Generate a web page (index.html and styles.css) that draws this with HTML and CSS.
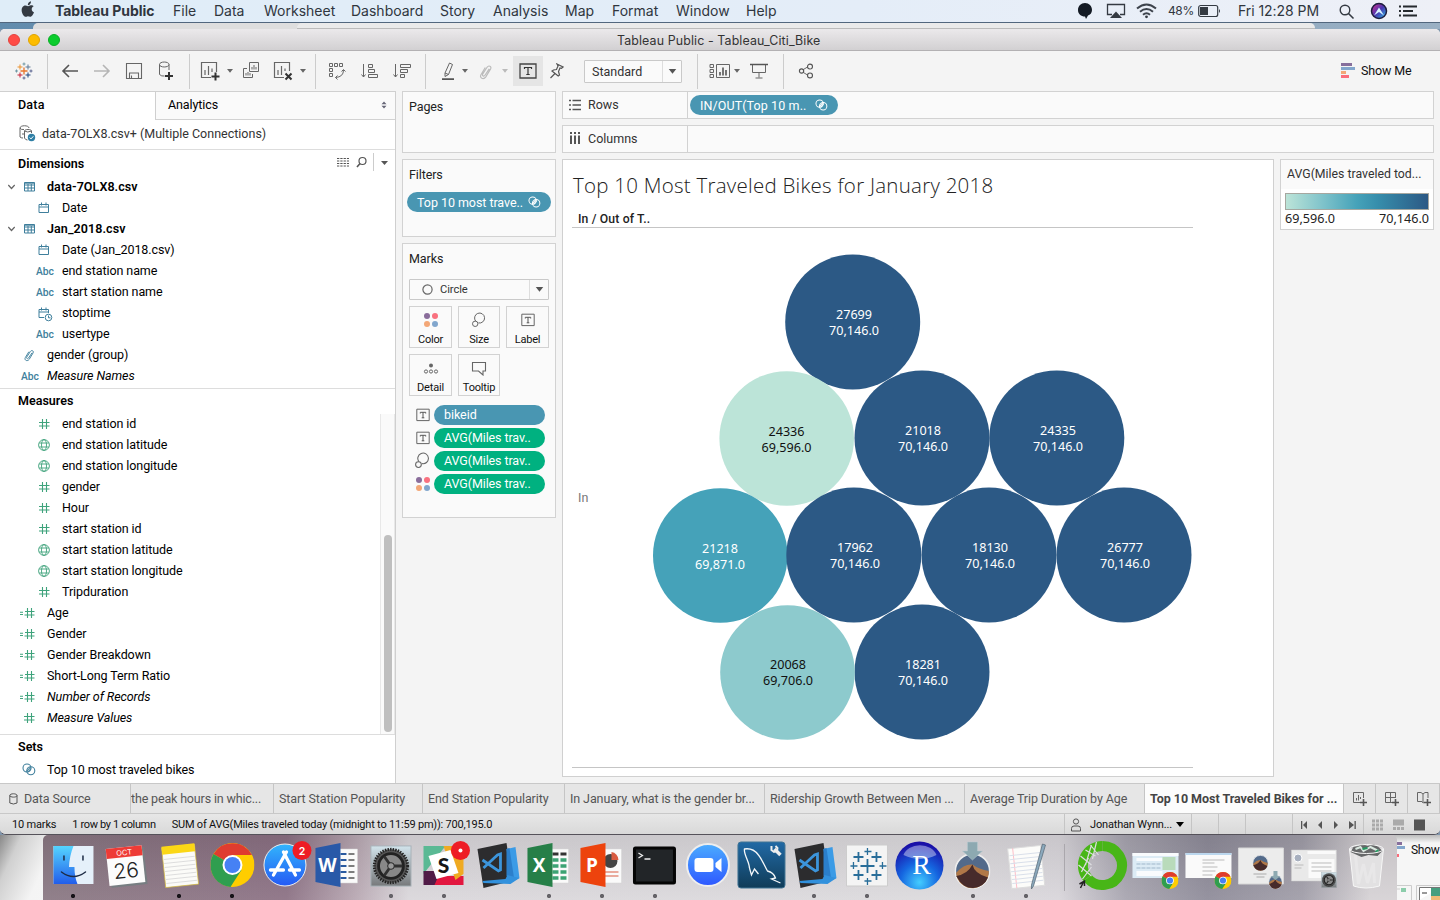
FILE: index.html
```html
<!DOCTYPE html>
<html lang="en">
<head>
<meta charset="utf-8">
<title>Tableau Public - Tableau_Citi_Bike</title>
<link rel="stylesheet" href="styles.css">
</head>
<body>
<svg class="defs" width="0" height="0">
  <symbol id="i-table" viewBox="0 0 12 10"><path d="M.5.5h10v8.500H.5zM.5 3h10M.5 6h10M4 2v7M7.300 2v7M.5 1.200h10" fill="none" stroke="#3f7f9c"/></symbol>
  <symbol id="i-date" viewBox="0 0 12 12"><path d="M1 2.500h9.500v8H1zM1 5h9.500M3.500.5v3M8 .5v3" fill="none" stroke="#3f7f9c"/></symbol>
  <symbol id="i-datetime" viewBox="0 0 15 15"><path d="M6 10.500H1V2.500h9.500V6M1 5h9.500M3.500.5v3M8 .5v3M10.500 8.500v2.300h2" fill="none" stroke="#3f7f9c"/><circle cx="10.500" cy="10.500" r="3.300" fill="none" stroke="#3f7f9c"/></symbol>
  <symbol id="i-clip" viewBox="0 0 14 16"><path d="M10.500 5.500 6.500 11.500c-1 1.500-3 .5-2.200-1L8.500 4c1.500-2.300 4.500-.8 3.300 1.500L7.300 13c-2.300 3.200-6.200 1-4.600-2L6.800 4.200" fill="none" stroke="currentColor" stroke-width="1.100"/></symbol>
  <symbol id="i-hash" viewBox="0 0 12 12"><path d="M4.500 1v10M8.500 1v10M1 4.500h10.500M1 8h10.500" fill="none" stroke="#3fa37c" stroke-width="1.100"/></symbol>
  <symbol id="i-calc" viewBox="0 0 15 12"><path d="M7.500 1v10M11.500 1v10M5 4.500h9.500M4.500 8h10M0 5.200h3M0 7.500h3" fill="none" stroke="#3fa37c" stroke-width="1.100"/></symbol>
  <symbol id="i-globe" viewBox="0 0 12 12"><g fill="none" stroke="#3fa37c" stroke-width=".9"><circle cx="6" cy="6" r="5.400"/><ellipse cx="6" cy="6" rx="2.500" ry="5.400"/><path d="M1.200 4h9.600M1.200 8h9.600"/></g></symbol>
  <symbol id="i-set" viewBox="0 0 14 13"><g fill="none" stroke="currentColor" stroke-width="1.100"><circle cx="5" cy="5" r="4"/><circle cx="8.800" cy="7.800" r="4"/><path d="M4.500 8.500 8.500 4M6 9l3-3.500"/></g></symbol>
  <symbol id="i-text" viewBox="0 0 14 14"><path d="M.8 1.200h12.400v11.400H.8z" fill="none" stroke="#666"/><path d="M4.300 5.500V4.300h5.400v1.200M7 4.300v5.500M5.700 9.800h2.600" fill="none" stroke="#555"/></symbol>
  <symbol id="i-size" viewBox="0 0 16 16"><g fill="none" stroke="#666"><path d="M4.700 9.200A5 5 0 1 1 7.400 10.900"/><circle cx="4.200" cy="11.800" r="2.700"/></g></symbol>
  <symbol id="i-color" viewBox="0 0 16 16"><circle cx="4" cy="4" r="3" fill="#8a6d9b"/><circle cx="12" cy="4" r="3" fill="#f9717f"/><circle cx="4" cy="12" r="3" fill="#f3a777"/><circle cx="12" cy="12" r="3" fill="#81a6cd"/></symbol>
  <symbol id="i-caret" viewBox="0 0 6 4"><path d="M0 0h6L3 3.800z" fill="currentColor"/></symbol>
  <symbol id="i-chev" viewBox="0 0 8 6"><path d="M.8 1 4 4.500 7.200 1" fill="none" stroke="#666" stroke-width="1.200"/></symbol>
  <symbol id="i-chrome" viewBox="0 0 44 44"><circle cx="22" cy="22" r="22" fill="#ffcd00"/><path d="M22 22 3 11A22 22 0 0 1 41.500 12H22z" fill="#df3c2f"/><path d="M3 11A22 22 0 0 0 20 44L31 27 22 22z" fill="#2f9e4f"/><circle cx="22" cy="22" r="10" fill="#fff"/><circle cx="22" cy="22" r="8" fill="#4681f4"/></symbol>
  <symbol id="i-word" viewBox="0 0 52 60"><path d="M18 14h27v34H18z" fill="#fafafa" stroke="#d5d5d5" stroke-width=".5"/></symbol>
  <symbol id="i-gear" viewBox="0 0 44 44"><rect x="1" y="1" width="42" height="42" fill="url(#g-steel)" stroke="#a8b2b8" stroke-width="1"/><circle cx="22" cy="22" r="17.500" fill="#555" /><circle cx="22" cy="22" r="17.500" fill="none" stroke="#222" stroke-width="3" stroke-dasharray="1.500 1.200"/><circle cx="22" cy="22" r="13" fill="#888" stroke="#222" stroke-width="3"/><path d="M22 22h12M22 22l-7-10M22 22l-7 10" stroke="#303030" stroke-width="3"/><circle cx="22" cy="22" r="3.500" fill="#999" stroke="#222"/></symbol>
  <symbol id="i-code" viewBox="0 0 52 60"><path d="m6 14 29-6 6 38-29 7z" fill="#2c2c2e"/><path d="m35 14 9-2 4 31-8 4z" fill="#3b9be6"/><path d="m35 14 3-1 5 33-8-5z" fill="#2b7fcb"/><path d="m11 46 23-2 2-4 12 3-9 6-27-1z" fill="#3291dd"/><path d="m11 25 16 11 2-1V19l-3 1-14 13" fill="none" stroke="#3c95dc" stroke-width="2.800"/><path d="M25 23v9l-5-4z" fill="#2c2c2e"/></symbol>
  <symbol id="i-mojave" viewBox="0 0 44 44"><circle cx="22" cy="22" r="21" fill="#536a8a" stroke="#eee" stroke-width="2"/><path d="M2 24q10-11 20-10 8 6 20 8a20 20 0 0 1-40 2z" fill="#b07848"/><path d="M2 28q14-2 20-14 2 11 19 16a20 20 0 0 1-37 1z" fill="#472b2b"/></symbol>
  <linearGradient id="g-steel" x2="0" y2="1"><stop stop-color="#d2e4ec"/><stop offset="1" stop-color="#77797b"/></linearGradient>
  <linearGradient id="g-blue" x2="0" y2="1"><stop stop-color="#32b5fc"/><stop offset="1" stop-color="#2559f4"/></linearGradient>
  <linearGradient id="g-zoom" x2="0" y2="1"><stop stop-color="#4bacff"/><stop offset="1" stop-color="#2e57ff"/></linearGradient>
  <linearGradient id="g-face" x2="0" y2="1"><stop stop-color="#55d5ff"/><stop offset="1" stop-color="#225dea"/></linearGradient>
  <linearGradient id="g-sql" x2="0" y2="1"><stop stop-color="#2169a5"/><stop offset="1" stop-color="#103c58"/></linearGradient>
  <radialGradient id="g-r" cx=".5" cy=".85" r=".8"><stop stop-color="#43cdff"/><stop offset=".5" stop-color="#1566e0"/><stop offset="1" stop-color="#1a10a8"/></radialGradient>
  <linearGradient id="g-siri" x1="0" x2="1" y2="1"><stop stop-color="#e0308f"/><stop offset=".5" stop-color="#4936b0"/><stop offset="1" stop-color="#2cc1e8"/></linearGradient>
</svg>

<header class="menubar">
  <svg class="apple" width="16" height="18" viewBox="0 0 16 18"><path d="M8 5.300C6.500 4.500 5 4.300 3.700 5 .8 6.800 1.200 11 3.500 14.500c1.500 1.800 2.500 1.300 4.300.7 2 .6 3 1 4.500-.8.9-1.100 1.400-2 1.700-3.100-3-1.300-2.900-4.900-.3-6.100C12.300 3.500 9.800 4.700 8 5.300zM7.800 4.300c0-2.200 1.400-3.600 3.200-4 .2 2.200-1.300 3.900-3.200 4z" fill="#343a42"/></svg>
  <b>Tableau Public</b><span>File</span><span>Data</span><span>Worksheet</span><span>Dashboard</span><span>Story</span><span>Analysis</span><span>Map</span><span>Format</span><span>Window</span><span>Help</span>
  <svg class="tray-a" width="86" height="20" viewBox="0 0 86 20"><path d="M9 2c4 0 7 3 7 7 0 3-2 5-4 5.500L10 18l-1-2.500C5 15.500 2 13 2 9s3-7 7-7z" fill="#131a24"/><path d="M36 13.500h-4.500V3.500h17v10H44" fill="none" stroke="#343a42" stroke-width="1.300"/><path d="m34 17 6-6.500 6 6.500z" fill="#343a42"/><g fill="none" stroke="#3d434c" stroke-width="2"><path d="M61 7.500q9.500-8 19 0"/><path d="M64 10.700q6.500-5.500 13 0"/><path d="M67 13.700q3.500-3 7 0"/></g><circle cx="70.500" cy="15.800" r="1.400" fill="#343a42"/></svg>
  <span class="pct">48%</span>
  <svg class="battery" width="24" height="14" viewBox="0 0 24 14"><rect x=".7" y="1.500" width="19" height="11" rx="2" fill="none" stroke="#343a42" stroke-width="1.200"/><path d="M2 3h8v8H2z" fill="#343a42"/><path d="M21 5q2 2 0 4z" fill="#343a42"/></svg>
  <span class="clock">Fri 12:28 PM</span>
  <svg class="tray-b" width="82" height="20" viewBox="0 0 82 20"><circle cx="6" cy="9" r="4.800" fill="none" stroke="#343a42" stroke-width="1.400"/><path d="m9.500 12.500 5 5" stroke="#343a42" stroke-width="1.600"/><circle cx="40" cy="10" r="7.500" fill="url(#g-siri)" stroke="#1d1c3e" stroke-width="1.500"/><path d="m35 14.500 5-8 5 8-5-3.500z" fill="#d9f4ff"/><path d="M60 5.500h2M60 10h2M60 14.500h2M64 5.500h14M64 10h10M64 14.500h14" stroke="#25292e" stroke-width="1.800"/></svg>
</header>
<div class="behind"><i></i><i></i></div>

<main class="window">
  <div class="titlebar"><i class="red"></i><i class="yellow"></i><i class="green"></i><span>Tableau Public - Tableau_Citi_Bike</span></div>

  <div class="toolbar">
    <span class="cell logo"><svg width="18" height="18" viewBox="0 0 18 18" fill="none"><path d="M9 5.500v7M5.500 9h7" stroke="#e8762c" stroke-width="1.300"/><path d="M5 2.500v5M2.500 5h5" stroke="#eb912c"/><path d="M13 2.500v5M10.500 5h5" stroke="#5c7896"/><path d="M5 10.500v5M2.500 13h5" stroke="#c72037"/><path d="M13 10.500v5M10.500 13h5" stroke="#1f457e"/><path d="M9 .5v3M7.500 2h3M1.500 7.500v3M0 9h3" stroke="#7099a5"/><path d="M9 14.500v3M7.500 16h3M16 7.500v3M14.500 9h3" stroke="#5b6591"/></svg></span>
    <i class="sep"></i>
    <span class="cell ml6"><svg width="18" height="16" viewBox="0 0 18 16"><path d="M17 8H2M8 2 2 8l6 6" fill="none" stroke="#555" stroke-width="1.600"/></svg></span>
    <span class="cell"><svg width="18" height="16" viewBox="0 0 18 16"><path d="M1 8h15M10 2l6 6-6 6" fill="none" stroke="#b5b5b5" stroke-width="1.600"/></svg></span>
    <span class="cell"><svg width="18" height="18" viewBox="0 0 18 18"><path d="M1.500 1.500h15v15h-15zM4.500 16v-5h9v5M6.500 16v-2.500" fill="none" stroke="#666" stroke-width="1.100"/></svg></span>
    <span class="cell"><svg width="18" height="20" viewBox="0 0 18 20"><path d="M2.500 3.500v10q2 2 5 1.500M12 9V3.500M2.500 3.500c0-3.300 9.500-3.300 9.500 0s-9.500 3.300-9.500 0" fill="none" stroke="#666"/><path d="M12 11v8M8 15h8" stroke="#333" stroke-width="2"/></svg></span>
    <i class="sep ml7"></i>
    <span class="cell ml4"><svg width="20" height="20" viewBox="0 0 20 20"><path d="M11 16.500H1.500v-15h15V11M5 14V9M8.500 14V5M12 11V7.500" fill="none" stroke="#666" stroke-width="1.200"/><path d="M15.500 11.500v8M11.500 15.500h8" stroke="#333" stroke-width="2"/></svg></span>
    <svg class="caret"><use href="#i-caret"/></svg>
    <span class="cell ml1"><svg width="18" height="18" viewBox="0 0 18 18"><path d="M7.500.5h9v9h-9zM5 6.500H1.500v9h9V12M10 7.500V5M12 7.500V3M14 7.500V5M4 13.500V11M6 13.500V10M8 13.500V11" fill="none" stroke="#666"/></svg></span>
    <span class="cell"><svg width="20" height="20" viewBox="0 0 20 20"><path d="M11 16.500H1.500v-15h15V10M5 14V9M8.500 14V5M12 10V7.500" fill="none" stroke="#666" stroke-width="1.200"/><path d="m12.500 12.500 6 6M18.500 12.500l-6 6" stroke="#333" stroke-width="2"/></svg></span>
    <svg class="caret"><use href="#i-caret"/></svg>
    <i class="sep ml8"></i>
    <span class="cell ml5"><svg width="18" height="18" viewBox="0 0 18 18"><path d="M1.500 1.500h3v3h-3zM6.500 1.500h3v3h-3zM11.500 1.500h3v3h-3zM1.500 6.500h3v3h-3zM1.500 11.500h3v3h-3zM15.500 8q0 7-8 7.500M13.500 9.500l2-2 2 2M9.500 13.500l-2 2 2 2" fill="none" stroke="#666"/></svg></span>
    <span class="cell ml1"><svg width="18" height="18" viewBox="0 0 18 18"><path d="M2.500 2v13M.5 12.500l2 2.500 2-2.500M7.500 2.500h4v3h-4zM7.500 7.500h6v3h-6zM7.500 12.500h9v3h-9z" fill="none" stroke="#666"/></svg></span>
    <span class="cell"><svg width="18" height="18" viewBox="0 0 18 18"><path d="M2.500 2v13M.5 12.500l2 2.500 2-2.500M7.500 2.500h10v3h-10zM7.500 7.500h7v3h-7zM7.500 12.500h4v3h-4z" fill="none" stroke="#666"/></svg></span>
    <i class="sep ml7"></i>
    <span class="cell ml6"><svg width="14" height="20" viewBox="0 0 14 20"><path d="M4 12 8.500 2l3 1.500-4 10L4 15.500zM4 12l3.500 1.500" fill="none" stroke="#666"/><path d="M1 18.200h12" stroke="#555" stroke-width="1.800"/></svg></span>
    <svg class="caret mln3"><use href="#i-caret"/></svg>
    <span class="cell faint"><svg width="15" height="17"><use href="#i-clip"/></svg></span>
    <svg class="caret faint"><use href="#i-caret"/></svg>
    <span class="cell active ml4"><svg width="18" height="16" viewBox="0 0 18 16"><path d="M1 1h16v14H1z" fill="none" stroke="#444" stroke-width="1.300"/><path d="M5.500 6V4.500h7V6M9 4.500v7M7.300 11.500h3.400" fill="none" stroke="#333" stroke-width="1.200"/></svg></span>
    <span class="cell mln2"><svg width="14" height="16" viewBox="0 0 14 16"><path d="m7 1 6 3-1.500 1.300L10 5 8.500 8.500l1 3.500-1.300 1L2 8l1.500-1 3-.5L8 3zM5 10.500.5 15" fill="none" stroke="#555" stroke-width="1.200"/></svg></span>
    <span class="select ml11"><span>Standard</span><em><svg class="caret dark"><use href="#i-caret"/></svg></em></span>
    <i class="sep ml15"></i>
    <span class="cell ml6"><svg width="22" height="18" viewBox="0 0 22 18"><path d="M1 2.500h3.500v3H1zM1 7.500h3.500v3H1zM1 12.500h3.500v3H1zM7.500 2.500h13v13h-13z" fill="none" stroke="#666"/><path d="M11 13.500V10M14 13.500V5.500M17 13.500V8" stroke="#555" stroke-width="1.600"/></svg></span>
    <svg class="caret mln3"><use href="#i-caret"/></svg>
    <span class="cell ml2"><svg width="18" height="18" viewBox="0 0 18 18"><path d="M2.500 2.500h13v8h-13zM9 10.500v5M5.500 16h7" fill="none" stroke="#666"/><path d="M0 2.500h18" stroke="#555" stroke-width="1.600"/></svg></span>
    <i class="sep ml8"></i>
    <span class="cell ml6"><svg width="16" height="18" viewBox="0 0 18 18"><path d="m5 8 6.500-4M5 10l6.500 4" stroke="#555"/><g fill="#f4f4f4" stroke="#555" stroke-width="1.300"><circle cx="4" cy="9" r="2.400"/><circle cx="13.500" cy="4" r="2.800"/><circle cx="13.500" cy="14" r="2.800"/></g></svg></span>
    <span class="showme"><svg width="14" height="15" viewBox="0 0 14 15"><path d="M0 0h11v3H0z" fill="#876f9c"/><path d="M0 4h14v3H0z" fill="#83a6cc"/><path d="M0 8h5v3H0z" fill="#f3a777"/><path d="M0 12h8v3H0z" fill="#fa6d7b"/></svg>Show Me</span>
  </div>

  <div class="main">
    <aside class="data">
      <div class="ptabs"><b>Data</b><span>Analytics<svg width="6" height="8" viewBox="0 0 6 8"><path d="M.5 3.200 3 .5l2.500 2.700zM.5 4.800 3 7.500l2.500-2.700z" fill="#667"/></svg></span></div>
      <div class="source"><svg width="17" height="17" viewBox="0 0 17 17"><path d="M1 3v9q1 1 3 1M1 3c0-3 9-3 9 0M1 3q1 2 4 1.500M5.500 6v7q1 2 3 2M5.500 6c0-2 7-2 7 0M5.500 6q3 2 7 0v2M3 9h2" fill="none" stroke="#666"/><circle cx="12.500" cy="12.500" r="3.700" fill="#2f7fa5"/><path d="m10.700 12.500 1.300 1.400 2.300-2.600" fill="none" stroke="#fff"/></svg>data-7OLX8.csv+ (Multiple Connections)</div>
      <section class="dims">
        <h2>Dimensions<svg width="54" height="18" viewBox="0 0 54 18"><path d="M0 5.500h12M0 8h12M0 10.500h12M0 13h12" stroke="#555" stroke-dasharray="2.300 1"/><circle cx="25.500" cy="8" r="3.500" fill="none" stroke="#555" stroke-width="1.200"/><path d="m23 10.500-3 3.500" stroke="#555" stroke-width="1.600"/><path d="M36.500 0v18" stroke="#ccc"/><path d="M44 8h7l-3.500 4z" fill="#555"/></svg></h2>
        <ul>
          <li class="top"><svg class="chev"><use href="#i-chev"/></svg><svg width="12" height="10"><use href="#i-table"/></svg><b>data-7OLX8.csv</b></li>
          <li class="in"><svg width="12" height="12"><use href="#i-date"/></svg>Date</li>
          <li class="top"><svg class="chev"><use href="#i-chev"/></svg><svg width="12" height="10"><use href="#i-table"/></svg><b>Jan_2018.csv</b></li>
          <li class="in"><svg width="12" height="12"><use href="#i-date"/></svg>Date (Jan_2018.csv)</li>
          <li class="in"><em>Abc</em>end station name</li>
          <li class="in"><em>Abc</em>start station name</li>
          <li class="in"><svg class="dt" width="15" height="15"><use href="#i-datetime"/></svg>stoptime</li>
          <li class="in"><em>Abc</em>usertype</li>
          <li class="out blue"><svg width="12" height="14"><use href="#i-clip"/></svg><span>gender (group)</span></li>
          <li class="out"><em>Abc</em><i>Measure Names</i></li>
        </ul>
      </section>
      <section class="meas">
        <h2>Measures</h2>
        <div class="scroll">
        <ul>
          <li class="in"><svg width="12" height="12"><use href="#i-hash"/></svg>end station id</li>
          <li class="in"><svg width="12" height="12"><use href="#i-globe"/></svg>end station latitude</li>
          <li class="in"><svg width="12" height="12"><use href="#i-globe"/></svg>end station longitude</li>
          <li class="in"><svg width="12" height="12"><use href="#i-hash"/></svg>gender</li>
          <li class="in"><svg width="12" height="12"><use href="#i-hash"/></svg>Hour</li>
          <li class="in"><svg width="12" height="12"><use href="#i-hash"/></svg>start station id</li>
          <li class="in"><svg width="12" height="12"><use href="#i-globe"/></svg>start station latitude</li>
          <li class="in"><svg width="12" height="12"><use href="#i-globe"/></svg>start station longitude</li>
          <li class="in"><svg width="12" height="12"><use href="#i-hash"/></svg>Tripduration</li>
          <li class="out"><svg class="calc" width="15" height="12"><use href="#i-calc"/></svg>Age</li>
          <li class="out"><svg class="calc" width="15" height="12"><use href="#i-calc"/></svg>Gender</li>
          <li class="out"><svg class="calc" width="15" height="12"><use href="#i-calc"/></svg>Gender Breakdown</li>
          <li class="out"><svg class="calc" width="15" height="12"><use href="#i-calc"/></svg>Short-Long Term Ratio</li>
          <li class="out"><svg class="calc" width="15" height="12"><use href="#i-calc"/></svg><i>Number of Records</i></li>
          <li class="out"><svg width="12" height="12"><use href="#i-hash"/></svg><i>Measure Values</i></li>
        </ul>
        <div class="track"><i></i></div>
        </div>
      </section>
      <section class="sets">
        <h2>Sets</h2>
        <ul><li class="out blue"><svg class="setico" width="14" height="13"><use href="#i-set"/></svg><span>Top 10 most traveled bikes</span></li></ul>
      </section>
    </aside>

    <div class="cards">
      <section class="card pages"><h3>Pages</h3></section>
      <section class="card filters"><h3>Filters</h3><div class="pill">Top 10 most trave..<svg width="13" height="12"><use href="#i-set"/></svg></div></section>
      <section class="card marks"><h3>Marks</h3>
        <div class="select circle"><svg width="11" height="11" viewBox="0 0 11 11"><circle cx="5.500" cy="5.500" r="4.600" fill="none" stroke="#666" stroke-width="1.200"/></svg><span>Circle</span><em><svg class="caret dark"><use href="#i-caret"/></svg></em></div>
        <div class="btns">
          <div><svg width="16" height="16"><use href="#i-color"/></svg>Color</div>
          <div><svg width="16" height="16"><use href="#i-size"/></svg>Size</div>
          <div><svg width="14" height="16"><use href="#i-text"/></svg>Label</div>
          <div><svg width="16" height="16" viewBox="0 0 16 16"><circle cx="8" cy="5.500" r="2" fill="#666"/><g fill="none" stroke="#666"><circle cx="3" cy="11.500" r="1.600"/><circle cx="8" cy="11.500" r="1.600"/><circle cx="13" cy="11.500" r="1.600"/></g></svg>Detail</div>
          <div><svg width="16" height="16" viewBox="0 0 16 16"><path d="M1.500 2.500h13v8.500H12v4L7.500 11h-6z" fill="none" stroke="#666" stroke-width="1.100"/></svg>Tooltip</div>
        </div>
        <div class="shelf"><svg width="14" height="14"><use href="#i-text"/></svg><span class="pill">bikeid</span></div>
        <div class="shelf"><svg width="14" height="14"><use href="#i-text"/></svg><span class="pill green">AVG(Miles trav..</span></div>
        <div class="shelf"><svg width="17" height="17"><use href="#i-size"/></svg><span class="pill green">AVG(Miles trav..</span></div>
        <div class="shelf"><svg width="16" height="16"><use href="#i-color"/></svg><span class="pill green">AVG(Miles trav..</span></div>
      </section>
    </div>

    <div class="work">
      <div class="axis card"><span class="name"><svg width="12" height="12" viewBox="0 0 12 12"><path d="M0 1.500h2M0 6h2M0 10.500h2M3.500 1.500H12M3.500 6H12M3.500 10.500H12" stroke="#555" stroke-width="1.600"/></svg>Rows</span><span class="pill">IN/OUT(Top 10 m..<svg width="13" height="12"><use href="#i-set"/></svg></span></div>
      <div class="axis card cols"><span class="name"><svg width="12" height="12" viewBox="0 0 12 12"><path d="M2 0v2M6 0v2M10 0v2M2 3.500V12M6 3.500V12M10 3.500V12" stroke="#555" stroke-width="2"/></svg>Columns</span></div>
      <div class="lower">
        <section class="sheet">
          <h1>Top 10 Most Traveled Bikes for January 2018</h1>
          <h4>In / Out of T..</h4>
          <div class="viz">
            <span>In</span>
            <svg width="553" height="539" viewBox="640 228 553 539">
              <g fill="#2c5985"><circle cx="852.700" cy="322" r="67.500"/><circle cx="922" cy="438" r="67.500"/><circle cx="1056.800" cy="438" r="67.500"/><circle cx="989" cy="555" r="67.500"/><circle cx="1124" cy="555" r="67.500"/><circle cx="922" cy="672" r="67.500"/></g>
              <circle cx="786.700" cy="438.500" r="67.300" fill="#bce4d8"/><circle cx="720.300" cy="555.500" r="67.300" fill="#45a2b9"/><circle cx="787.500" cy="672.500" r="67.300" fill="#8dcacd"/><circle cx="853.800" cy="555" r="67.500" fill="#2c5985"/>
              <g fill="#fff"><text x="854" y="319">27699</text><text x="854" y="335">70,146.0</text><text x="923" y="435">21018</text><text x="923" y="451">70,146.0</text><text x="1058" y="435">24335</text><text x="1058" y="451">70,146.0</text><text x="720" y="553">21218</text><text x="720" y="569">69,871.0</text><text x="855" y="552">17962</text><text x="855" y="568">70,146.0</text><text x="990" y="552">18130</text><text x="990" y="568">70,146.0</text><text x="1125" y="552">26777</text><text x="1125" y="568">70,146.0</text><text x="923" y="669">18281</text><text x="923" y="685">70,146.0</text></g>
              <g fill="#111"><text x="786.500" y="436">24336</text><text x="786.500" y="452">69,596.0</text><text x="788" y="669">20068</text><text x="788" y="685">69,706.0</text></g>
            </svg>
          </div>
        </section>
        <section class="legend"><h3>AVG(Miles traveled tod...</h3><div class="ramp"></div><p><span>69,596.0</span><span>70,146.0</span></p></section>
      </div>
    </div>
  </div>

  <nav class="sheets">
    <span class="src"><svg width="9" height="12" viewBox="0 0 9 12"><path d="M.8 2.500v7.500q3.700 2 7.200 0V2.500M.8 2.500c0-2.300 7.200-2.300 7.200 0s-7.200 2-7.200 0" fill="none" stroke="#555"/></svg>Data Source</span><span class="cut">the peak hours in whic...</span><span>Start Station Popularity</span><span>End Station Popularity</span><span>In January, what is the gender br...</span><span>Ridership Growth Between Men ...</span><span>Average Trip Duration by Age</span><b>Top 10 Most Traveled Bikes for ...</b>
    <span class="add"><svg width="16" height="16" viewBox="0 0 16 16"><path d="M8 11.500H1.500v-10h10V7M4.500 9.500V7M6.500 9.500V4M8.500 8V6" fill="none" stroke="#666"/><path d="M11.500 8v7M8 11.500h7" stroke="#555" stroke-width="1.600"/></svg></span>
    <span class="add"><svg width="16" height="16" viewBox="0 0 16 16"><path d="M8 11.500H1.500v-10h10V7M6.500 1.500v10M1.500 6.500h10" fill="none" stroke="#666"/><path d="M11.500 8v7M8 11.500h7" stroke="#555" stroke-width="1.600"/></svg></span>
    <span class="add"><svg width="16" height="16" viewBox="0 0 16 16"><path d="M8 11.500 7 12l-1-1.500H1.500v-9H5l2 1.500 2-1.500h3V7M7 3v8" fill="none" stroke="#666"/><path d="M11.500 8v7M8 11.500h7" stroke="#555" stroke-width="1.600"/></svg></span>
  </nav>
  <footer class="status">
    <span>10 marks</span><span class="rowcol">1 row by 1 column</span><span class="sum">SUM of AVG(Miles traveled today (midnight to 11:59 pm)): 700,195.0</span>
    <span class="user"><svg width="10" height="14" viewBox="0 0 10 14"><circle cx="5" cy="3.500" r="2.600" fill="none" stroke="#555"/><path d="M.5 13v-2.500q0-2.500 2.500-2.500h4q2.500 0 2.500 2.500V13z" fill="none" stroke="#555"/></svg><span>Jonathan Wynn...</span><svg width="8" height="5" viewBox="0 0 8 5"><path d="M0 0h8L4 5z"/></svg></span>
    <i class="slot"></i><i class="slot"></i><i class="slot wide"></i>
    <span class="steps"><svg width="56" height="8" viewBox="0 0 56 8" fill="#555"><path d="M0 0h1.300v8H0zM6 0v8L2 4zM21 0v8l-4-4zM33 0v8l4-4zM48 0v8l5-4zM53.500 0h1.300v8h-1.300z"/></svg></span>
    <span class="views"><svg width="53" height="12" viewBox="0 0 53 12"><path d="M0 2h11M0 6h11M0 10h11" stroke="#aaa" stroke-width="3" stroke-dasharray="3 1"/><path d="M21 .5h11v6H21zM21 8h3v3h-3zM25 8h3v3h-3zM29 8h3v3h-3z" fill="#aaa"/><path d="M42 .5h11v11H42z" fill="#555"/></svg></span>
  </footer>
</main>

<div class="desk">
  <div class="peek"><svg width="8" height="15" viewBox="0 0 8 15"><path d="M0 0h5v3H0z" fill="#876f9c"/><path d="M0 4h8v3H0z" fill="#83a6cc"/><path d="M0 12h2v3H0z" fill="#fa6d7b"/></svg><span>Show</span><svg class="frag" width="43" height="17" viewBox="0 0 43 17"><path d="M0 2.500h14.500V17M0 6h3M19.500 17V2.500H43" fill="none" stroke="#ccc"/><path d="M4 5h5v4H4z" fill="#8ccdab"/><path d="M22.500 17V4.500H43" fill="#fff" stroke="#777"/><path d="M25 10h5" stroke="#999" stroke-width="2"/><path d="M34 5h9v8h-9z" fill="#469f7f"/><path d="M34 13h9v4h-9z" fill="#f0ba76"/></svg></div>
  <div class="dock">
    <svg class="run" viewBox="0 0 52 60"><path d="M6 11h40v38H6z" fill="#e5f0fa"/><path d="M6 11h20q-4 10-4.500 21H27q0 10 3 17H6z" fill="url(#g-face)"/><path d="M16.500 21v4M35.500 21v4M14 37q12 9 24 0" fill="none" stroke="#1d2b45" stroke-width="1.500" stroke-linecap="round"/></svg>
    <svg viewBox="0 0 52 60"><g transform="rotate(-6 26 30)"><path d="M9 14h36v37H9z" fill="#777e82"/><path d="M7 12h36v37H7z" fill="#fcfcfc"/><path d="M7 12h36v10H7z" fill="#ee3b36"/><text x="25" y="20" class="cal-m">OCT</text><text x="25" y="43" class="cal-d">26</text></g></svg>
    <svg class="run" viewBox="0 0 52 60"><g transform="rotate(-6 26 30)"><path d="M10 11h33v40H10z" fill="#fbfbf8" stroke="#d5bb3d" stroke-width=".7"/><path d="M10 10h33v8H10z" fill="#fbd716"/><path d="M11 23h31M11 27h31M11 31h31M11 35h31M11 39h31M11 43h31M11 47h31" stroke="#ddd"/></g></svg>
    <svg class="run" viewBox="0 0 52 60"><use href="#i-chrome" x="4" y="8" width="44" height="44"/></svg>
    <svg viewBox="0 0 52 60"><circle cx="25.500" cy="30" r="21" fill="url(#g-blue)" stroke="#eee"/><path d="m27 17-13 23M24 17l12 23M11 35h13M30 35h10" stroke="#fff" stroke-width="3.300" stroke-linecap="round"/><circle cx="42.500" cy="15.500" r="9.500" fill="#ee1c25"/><text x="42.500" y="19.500" class="badge">2</text></svg>
    <svg viewBox="0 0 52 60"><use href="#i-word"/><path d="M28 19h6M28 25h6M28 31h6M28 37h6M28 43h6" stroke="#29599f" stroke-width="2"/><path d="M36 19h6M36 25h6M36 31h6M36 37h6M36 43h6" stroke="#555" stroke-width="1.400"/><path d="m3 13 25-5v44L3 47z" fill="#2959a8"/><text x="15" y="37" class="office">W</text></svg>
    <svg class="run soft" viewBox="0 0 52 60"><use href="#i-gear" x="4" y="10" width="43" height="42"/></svg>
    <svg class="run soft" viewBox="0 0 52 60"><path d="M5 11h22L5 39z" fill="#5ab994"/><path d="M5 36h17l-5 14H5z" fill="#511b47"/><path d="m16 50 4-9h25v9z" fill="#e2173f"/><path d="M25 11h20v28l-8 6z" fill="#efaa22"/><path d="m10 21 22-6 8 23-22 6z" fill="#fff"/><text x="25" y="38" class="slack">S</text><circle cx="42" cy="15.500" r="9.500" fill="#ee1c25"/><circle cx="42" cy="15.500" r="2" fill="#fff"/></svg>
    <svg viewBox="0 0 52 60"><use href="#i-code" width="52" height="60"/></svg>
    <svg class="run soft" viewBox="0 0 52 60"><use href="#i-word"/><path d="M29 19h14" stroke="#333" stroke-width="3" stroke-dasharray="6 2"/><path d="M29 25h14M29 31h14M29 37h14M29 43h14" stroke="#3ca374" stroke-width="3.500" stroke-dasharray="6 2"/><path d="m4 13 25-5v44L4 47z" fill="#267f48"/><text x="15.500" y="37" class="office">X</text></svg>
    <svg class="run soft" viewBox="0 0 52 60"><use href="#i-word"/><circle cx="34" cy="26" r="7" fill="#444"/><path d="M35 25v-8a8 8 0 0 1 7 8z" fill="#d95b41"/><path d="M28 37h14M28 41h14" stroke="#d95b41"/><path d="m4 13 25-5v44L4 47z" fill="#ed430d"/><text x="15.500" y="37" class="office">P</text></svg>
    <svg class="run soft" viewBox="0 0 52 60"><rect x="5" y="13" width="40" height="35" rx="1" fill="#222528" stroke="#050505" stroke-width="3"/><path d="m9 18 4 2.500-4 2.500M15 24h6" fill="none" stroke="#eee" stroke-width="1.300"/></svg>
    <svg viewBox="0 0 52 60"><circle cx="25.500" cy="30" r="21" fill="url(#g-zoom)" stroke="#eee" stroke-width="2"/><rect x="12" y="23" width="19" height="14" rx="3" fill="#fff"/><path d="m33 28 6-5v14l-6-5z" fill="#fff"/></svg>
    <svg viewBox="0 0 52 60"><rect x="2.500" y="7" width="47" height="46" rx="3" fill="url(#g-sql)" stroke="#417494"/><path d="M14 33c0-6-6-14-5-19 6-1 11 2 14 6 4 5 6 11 9 16 4 1 7 4 8 7l-4 1 9 4M14 33l2 7 3-6 4 5" fill="none" stroke="#f5f8fa" stroke-width="1.300"/><path d="m39 14 6 6" stroke="#eee" stroke-width="3.500"/><path d="M36 11v4l2.500 2 3-1 .5-3-2-2" fill="none" stroke="#eee" stroke-width="2"/></svg>
    <svg class="run soft" viewBox="0 0 52 60"><use href="#i-code" width="52" height="60"/></svg>
    <svg class="run soft" viewBox="0 0 52 60"><path d="M5 10h41v41H5z" fill="#f4f4f4" stroke="#ccc"/><g stroke="#286d99" stroke-width="1.800"><path d="M26 24v14M19 31h14M17 17v10M12 22h10M35 17v10M30 22h10M17 35v10M12 40h10M35 35v10M30 40h10"/><path d="M26 13v7M23 16.500h7M26 43v7M23 46h7M12 27v7M9 31h7M41 27v7M38 31h7" stroke-width="1.300"/></g></svg>
    <svg viewBox="0 0 52 60"><circle cx="25" cy="30.500" r="24" fill="url(#g-r)"/><path d="M9 20a17 13 0 0 1 33 0q-16 8-33 0z" fill="#fff" opacity=".4"/><text x="27" y="39" class="rlogo">R</text></svg>
    <svg class="run soft" viewBox="0 0 52 60"><use href="#i-mojave" x="7" y="18" width="36" height="36"/><path d="M20 7h10v9h5L25 25 15 16h5z" fill="#8da9b1" stroke="#b8cbd0" stroke-width=".5"/></svg>
    <svg class="run soft" viewBox="0 0 52 60"><g transform="rotate(-6 26 30)"><path d="M9 12h33v40H9z" fill="#fcfcfa" stroke="#ddd"/><path d="M14 12v40" stroke="#f9a" stroke-width=".6"/><path d="M10 19h31M10 23h31M10 27h31M10 31h31M10 35h31M10 39h31M10 43h31M10 47h31" stroke="#d9dfea"/></g><path d="m42 9 3 1-12 41-2 3 0-4z" fill="#8ba9bd" stroke="#536473" stroke-width=".7"/></svg>
    <i class="divide"></i>
    <svg viewBox="0 0 52 60"><path d="M26 11a19.500 19.500 0 1 1-15 32" fill="none" stroke="#48b617" stroke-width="10"/><path d="M26 11a19.500 19.500 0 0 0-15 32" fill="none" stroke="#48b617" stroke-width="10"/><path d="m14 10 8 10M20 7l-4 17M9 15l10 6M15 10l-6 20M4 21l11 9M12 23l-7 14M2 30l13 11M15 32 6 44" stroke="#dedde1" stroke-width="1.200"/><path d="m4 53 3-6M3 49l5-3v5" stroke="#222" stroke-width="1.500" fill="none"/></svg>
    <svg viewBox="0 0 52 60"><path d="M3 18h46v25H3z" fill="#dcebf5"/><path d="M3 18h46v3H3zM7 23h26v3H7zM7 36h26v5H7z" fill="#f9fbfd"/><path d="M33 22h13v13H33z" fill="#b9dbbb"/><path d="M7 29h25M7 33h24" stroke="#9fb7cb" stroke-dasharray="4 1"/><use href="#i-chrome" x="32" y="37" width="17" height="17"/></svg>
    <svg viewBox="0 0 52 60"><path d="M3 18h46v25H3z" fill="#fafafa"/><path d="M3 19h46" stroke="#bbd7ee" stroke-width="2"/><path d="M20 25h22M20 28h12M20 32h15M20 36h13M20 40h10" stroke="#aaa" stroke-width=".8"/><use href="#i-chrome" x="32" y="37" width="17" height="17"/></svg>
    <svg viewBox="0 0 52 60"><path d="M3 13h45v36H3z" fill="#ececec" stroke="#d6d6d6"/><use href="#i-mojave" x="17" y="20" width="16" height="16"/><path d="M18 39h13M21 42h8" stroke="#aaa"/><use href="#i-mojave" x="33" y="40" width="14" height="14"/><path d="M38 36h4v5h3l-5 4-5-4h3z" fill="#8da9b1"/></svg>
    <svg viewBox="0 0 52 60"><path d="M3 15h45v31H3z" fill="#e9e9e9" stroke="#ccc" stroke-width=".5"/><path d="M19 16h28v3H19zM20 24h26v19H20z" fill="#fafafa"/><circle cx="9.500" cy="23" r="4" fill="#a8b0bf" stroke="#fff"/><path d="M23 28h20M23 32h20M23 36h20M6 30h9M6 33h7" stroke="#bbb"/><use href="#i-gear" x="32" y="37" width="17" height="16"/></svg>
    <svg viewBox="0 0 52 60"><path d="m8 14 4 37q12 4 26 0l4-37z" fill="#e2e1e2" stroke="#f7f7f7"/><path d="m14 20 3 29 5-20 4 19 6-20 1 20" fill="none" stroke="#fff" stroke-width="3" opacity=".22"/><path d="m9 17 3-5 5-1 4-2 5 2 6-2 5 3 4 4-5 5-9-1-7 2z" fill="#656768"/><path d="m14 14 5-2 3 4 7-4 8 4" fill="none" stroke="#d9e7df" stroke-width="2"/><path d="m21 14 5-1M34 17l3-2" stroke="#279a62" stroke-width="2"/><ellipse cx="25" cy="14" rx="17" ry="4.500" fill="none" stroke="#f5f5f5"/></svg>
  </div>
</div>
</body>
</html>
```

FILE: styles.css
```css
* { box-sizing: border-box; }
body { margin: 0; width: 1440px; height: 900px; overflow: hidden; display: flex; flex-direction: column; background: #8096ad; font: 12.5px/21px Roboto, "Liberation Sans", sans-serif; color: #222; }
svg { display: block; flex: none; }
.defs { position: absolute; }
h1, h2, h3, h4, ul, p { margin: 0; padding: 0; font-weight: normal; list-style: none; }

/* macOS menu bar */
.menubar { height: 23px; flex: none; display: grid; grid-template-columns: 55px 118px 41px 50px 87px 89px 53px 72px 47px 64px 70px 330px 92px 30px 40px 101px 90px; align-items: center; background: linear-gradient(90deg, #dfedf8, #e4edf8 60%, #eef0f7); border-bottom: 1px solid #52677e; font: 14px/22px Inter, sans-serif; color: #30363e; white-space: nowrap; }
.menubar b { font-weight: 700; letter-spacing: -.05px; }
.apple { margin: -2px 0 0 20px; }
.menubar .pct { font-size: 12px; letter-spacing: -.4px; }
.menubar .clock { letter-spacing: -.05px; }
.behind { height: 6px; flex: none; display: flex; padding-left: 33px; background: linear-gradient(90deg, #628cad, #9ab0c4); }
.behind i { width: 270px; background: #dedede; border-radius: 5px 0 0 0; }
.behind i + i { width: 1018px; margin-left: -6px; background: #eaeaea; border-bottom: 1px solid #bbb; border-radius: 5px 5px 0 0; }

/* application window */
.window { height: 806px; flex: none; display: flex; flex-direction: column; border-radius: 5px 5px 6px 6px; overflow: hidden; background: #f4f4f4; border-bottom: 1px solid #55525a; }
.titlebar { height: 22px; flex: none; display: flex; align-items: center; gap: 8px; padding-left: 8px; background: linear-gradient(#ebe9eb, #d2d0d2); border-bottom: 1px solid #b3b1b3; font: 12.4px/22px Inter, sans-serif; letter-spacing: .12px; color: #333; }
.titlebar i { width: 12px; height: 12px; border-radius: 50%; background: #ff4b45; border: 1px solid #e2433e; }
.titlebar .yellow { background: #fdbc00; border-color: #dfa300; }
.titlebar .green { background: #0bcc2d; border-color: #09ad26; }
.titlebar span { flex: 1; padding: 2px 0 0 549px; }

.toolbar { height: 40px; flex: none; display: flex; align-items: center; color: #666; }
.cell { width: 32px; height: 30px; flex: none; display: flex; align-items: center; justify-content: center; }
.cell.logo { width: 47px; }
.cell.active { width: 30px; background: #e5e5e5; }
.faint { color: #bbb; }
.sep { width: 1px; height: 35px; flex: none; background: #ccc; margin-top: 1px; }
.caret { width: 8px; height: 4px; flex: none; }
.caret.dark { color: #555; width: 9px; height: 5px; }
.ml1 { margin-left: 1px; } .ml2 { margin-left: 2px; } .ml4 { margin-left: 4px; } .ml5 { margin-left: 5px; }
.ml6 { margin-left: 6px; } .ml7 { margin-left: 7px; } .ml8 { margin-left: 8px; } .ml11 { margin-left: 11px; }
.ml15 { margin-left: 15px; } .mln2 { margin-left: -2px; } .mln3 { margin-left: -3px; }
.select { width: 98px; height: 23px; display: flex; align-items: center; padding-left: 7px; border: 1px solid #c9c9c9; background: #fafafa; border-radius: 1px; color: #333; }
.select em { margin-left: auto; width: 19px; height: 100%; display: grid; place-items: center; border-left: 1px solid #ddd; }
.showme { margin-left: auto; width: 99px; margin-top: -1px; display: flex; gap: 6px; align-items: center; letter-spacing: -.15px; color: #111; }

.main { height: 692px; flex: none; display: flex; }

/* data pane */
.data { width: 396px; display: flex; flex-direction: column; background: #fff; border-right: 1px solid #cfcfcf; border-top: 1px solid #d0d0d0; color: #000; }
.ptabs { height: 28px; display: flex; line-height: 26px; }
.ptabs b { width: 155px; padding-left: 18px; font-weight: 500; letter-spacing: .2px; }
.ptabs span { flex: 1; display: flex; align-items: center; justify-content: space-between; padding: 0 8px 1px 12px; letter-spacing: -.1px; background: #fafafa; border-left: 1px solid #cfcfcf; border-bottom: 1px solid #d2d2d2; }
.source { height: 30px; display: flex; align-items: center; gap: 6px; padding: 0 0 2px 19px; border-bottom: 1px solid #ddd; color: #333; }
.data h2 { display: flex; justify-content: space-between; padding-left: 18px; font-size: 12.5px; font-weight: 600; }
.dims { height: 239px; padding-top: 3px; border-bottom: 1px solid #ddd; }
.dims h2 { height: 23px; padding-right: 4px; }
.data li { height: 21px; display: flex; align-items: center; white-space: nowrap; letter-spacing: -.08px; }
.data li.in { padding-left: 38px; }
.data li.in svg { width: 12px; margin-right: 12px; }
.data li.in svg.dt { width: 15px; margin-right: 9px; margin-top: 3px; }
.data li em { font: 500 10.3px/20px Roboto, sans-serif; letter-spacing: -.1px; color: #3f7f9c; width: 26px; margin-left: -2px; padding-top: 2px; }
.data li.top { padding-left: 7px; }
.data li.top b { font-weight: 600; letter-spacing: .08px; }
.chev { width: 9px; height: 6px; margin-right: 8px; }
.data li.top .chev + svg { margin-right: 11px; }
.data li.out { padding-left: 23px; }
.data li.out svg { margin-right: 12px; }
.data li.out svg.calc { margin-left: -3px; }
.data li.out svg.setico { margin: 0 11px 0 -1px; }
.data li.blue { color: #3f7f9c; }
.data li.blue span { color: #000; }
.meas { height: 346px; padding-top: 1px; border-bottom: 1px solid #ddd; }
.meas h2 { height: 23px; }
.scroll { display: flex; justify-content: space-between; }
.track { width: 15px; height: 320px; margin-top: 1px; background: #fafafa; border: solid #e8e8e8; border-width: 0 1px; padding: 121px 3px 0; }
.track i { display: block; width: 8px; height: 197px; border-radius: 4px; background: #bfbfbf; }
.sets { padding-top: 1px; }
.sets h2 { height: 23px; }

/* shelves */
.cards { width: 154px; margin-left: 6px; display: flex; flex-direction: column; gap: 6px; }
.card { background: #fafafa; border: 1px solid #d2d2d2; }
.card h3 { padding: 4px 0 0 6px; font-size: 12.5px; letter-spacing: -.1px; }
.pages { height: 62px; }
.filters { height: 78px; }
.marks { height: 275px; }
.pill { height: 20px; display: flex; align-items: center; border-radius: 10px; background: #4996b2; color: #fff; white-space: nowrap; padding-left: 10px; letter-spacing: -.05px; }
.filters .pill { margin: 7px 4px 0; }
.pill svg { margin-left: 5px; }
.circle { width: 140px; height: 21px; margin: 10px 0 0 6px; padding-left: 12px; font-size: 11.2px; }
.circle > span { margin-left: 7px; letter-spacing: -.1px; }
.btns { display: grid; grid-template-columns: 43px 42px 43px; gap: 6px; padding: 6px 0 0 6px; }
.btns div { height: 42px; border: 1px solid #d2d2d2; display: flex; flex-direction: column; align-items: center; padding-top: 5px; font-size: 11px; letter-spacing: -.2px; line-height: 20px; color: #111; }
.btns svg { margin-bottom: 2px; }
.shelf { height: 23px; display: grid; grid-template-columns: 31px 111px; align-items: center; }
.shelf svg { justify-self: center; margin-left: 8px; }
.btns + .shelf { margin-top: 7px; }
.pill.green { background: #00b180; letter-spacing: -.1px; }

.work { width: 872px; margin-left: 6px; display: flex; flex-direction: column; gap: 6px; }
.axis { height: 28px; display: flex; align-items: center; }
.axis .name { width: 125px; height: 26px; display: flex; align-items: center; gap: 7px; padding: 0 0 1px 6px; border-right: 1px solid #d2d2d2; color: #333; }
.axis.cols .name { padding-bottom: 2px; }
.axis .pill { width: 148px; margin-left: 2px; letter-spacing: .1px; }
.axis .pill svg { margin-left: 9px; }
.lower { display: flex; gap: 6px; }
.sheet { width: 712px; height: 618px; background: #fff; border: 1px solid #d0d0d0; }
.sheet h1 { padding: 11px 0 0 10px; font: 300 20.5px/29px "Open Sans", sans-serif; letter-spacing: .25px; color: #222; }
.sheet h4 { width: 621px; margin-left: 9px; height: 28px; padding: 9px 0 0 6px; font-size: 12.2px; font-weight: 500; letter-spacing: .15px; color: #222; border-bottom: 1px solid #c5c5c5; }
.viz { width: 621px; height: 540px; margin-left: 9px; display: flex; align-items: center; border-bottom: 1px solid #c5c5c5; color: #777; }
.viz span { width: 68px; flex: none; padding-left: 6px; }
.viz text, .legend p { font: 12.6px/18px "Noto Sans", sans-serif; text-anchor: middle; }
.legend { width: 154px; height: 71px; background: #fff; border: 1px solid #d2d2d2; }
.legend h3 { height: 29px; padding: 4px 0 0 6px; font-size: 12.3px; background: #fafafa; color: #333; white-space: nowrap; }
.ramp { height: 17px; margin: 4px 4px 0; border: 1px solid #a6a7a0; background: linear-gradient(90deg, #bce4d8, #81c4cb 25%, #45a2b9 50%, #368dab 65%, #2c5985); }
.legend p { display: flex; justify-content: space-between; padding: 0 4px; }

/* sheet tabs */
.sheets { height: 31px; flex: none; display: grid; grid-template-columns: 131px 143px 149px 142px 200px 200px 180px 199px 32px 32px 32px; background: #e6e6e6; border-top: 1px solid #c8c8c8; border-bottom: 1px solid #c8c8c8; line-height: 29px; letter-spacing: -.1px; color: #555; }
.sheets > * { border-right: 1px solid #c5c5c5; padding-left: 5px; white-space: nowrap; overflow: hidden; }
.sheets .cut { padding-left: 0; letter-spacing: -.16px; }
.sheets b { background: #fcfcfc; font-weight: 700; color: #444; letter-spacing: -.03px; }
.sheets .src { display: flex; align-items: center; gap: 6px; padding-left: 9px; }
.sheets .add { display: grid; place-items: center; padding: 0; }
.status { height: 21px; flex: none; display: flex; align-items: center; padding-left: 12px; background: linear-gradient(#e7e7e7, #d8d8d8); font-size: 11px; letter-spacing: -.17px; color: #111; white-space: nowrap; }
.status > span { margin-right: 16px; }
.status .rowcol { letter-spacing: -.35px; }
.status .sum { letter-spacing: -.2px; }
.status .user { margin: 0 0 0 auto; width: 127px; height: 21px; display: flex; align-items: center; padding-left: 6px; border-left: 1px solid #c5c5c5; }
.user span { width: 86px; margin-left: 9px; }
.slot { width: 27px; height: 21px; border-left: 1px solid #c5c5c5; }
.slot.wide { width: 47px; }
.status .steps { margin: 0; width: 71px; height: 21px; border-left: 1px solid #c5c5c5; display: flex; align-items: center; padding-left: 8px; }
.status .views { margin: 0; width: 77px; height: 21px; border-left: 1px solid #c5c5c5; display: flex; align-items: center; padding-left: 8px; }

/* desktop and dock */
.desk { height: 65px; flex: none; display: grid; background: linear-gradient(115deg, #888 0, #d0d0d0 1.5%, #f4f4f4 4%, #fff 20%); }
.desk > * { grid-area: 1 / 1; }
.peek { margin-left: 1380px; padding: 5px 0 0 17px; display: grid; grid-template: 20px 1fr / 14px 29px; background: linear-gradient(#bbb, #f6f6f6 8px); font-size: 12px; letter-spacing: -.3px; color: #111; overflow: hidden; }
.peek > svg { margin-top: 2px; }
.peek .frag { grid-column: 1 / 3; align-self: end; margin: 0; }
.dock { width: 1354px; margin-left: 43px; padding-left: 4px; display: flex; border-radius: 5px 5px 0 0; background: linear-gradient(rgba(0, 0, 0, .07), rgba(255, 255, 255, .08)), linear-gradient(90deg, #887681 0, #8a6f82 18%, #b6a5b0 23%, #d9d6da 27%, #dbd9dc 65%, #d8d5da 75%, #a6a3ae 80%, #8d8a98 86%, #9f9ca7 93%, #d5d1d4 98%); }
.dock > svg { width: 52.94px; height: 60px; }
.dock > .run { height: 65px; padding-bottom: 5px; background: radial-gradient(circle at 26px 61px, #161318 0 1.8px, transparent 2.4px); }
.dock > .soft { background: radial-gradient(circle at 26px 61px, #656368 0 1.8px, transparent 2.4px); }
.divide { width: 1px; height: 47px; margin: 9px 11px 0 11px; background: #aaa7ac; }
.cal-m { font: 7.5px Inter, sans-serif; fill: #fff; text-anchor: middle; }
.cal-d { font: 300 21px Inter, sans-serif; fill: #222; text-anchor: middle; }
.badge { font: 600 10.5px Inter, sans-serif; fill: #fff; text-anchor: middle; }
.office { font: 700 19px "Open Sans", sans-serif; fill: #fff; text-anchor: middle; }
.slack { font: 900 21px Lato, sans-serif; fill: #161616; text-anchor: middle; }
.rlogo { font: 28px "Liberation Serif", serif; fill: #fff; text-anchor: middle; }
```
